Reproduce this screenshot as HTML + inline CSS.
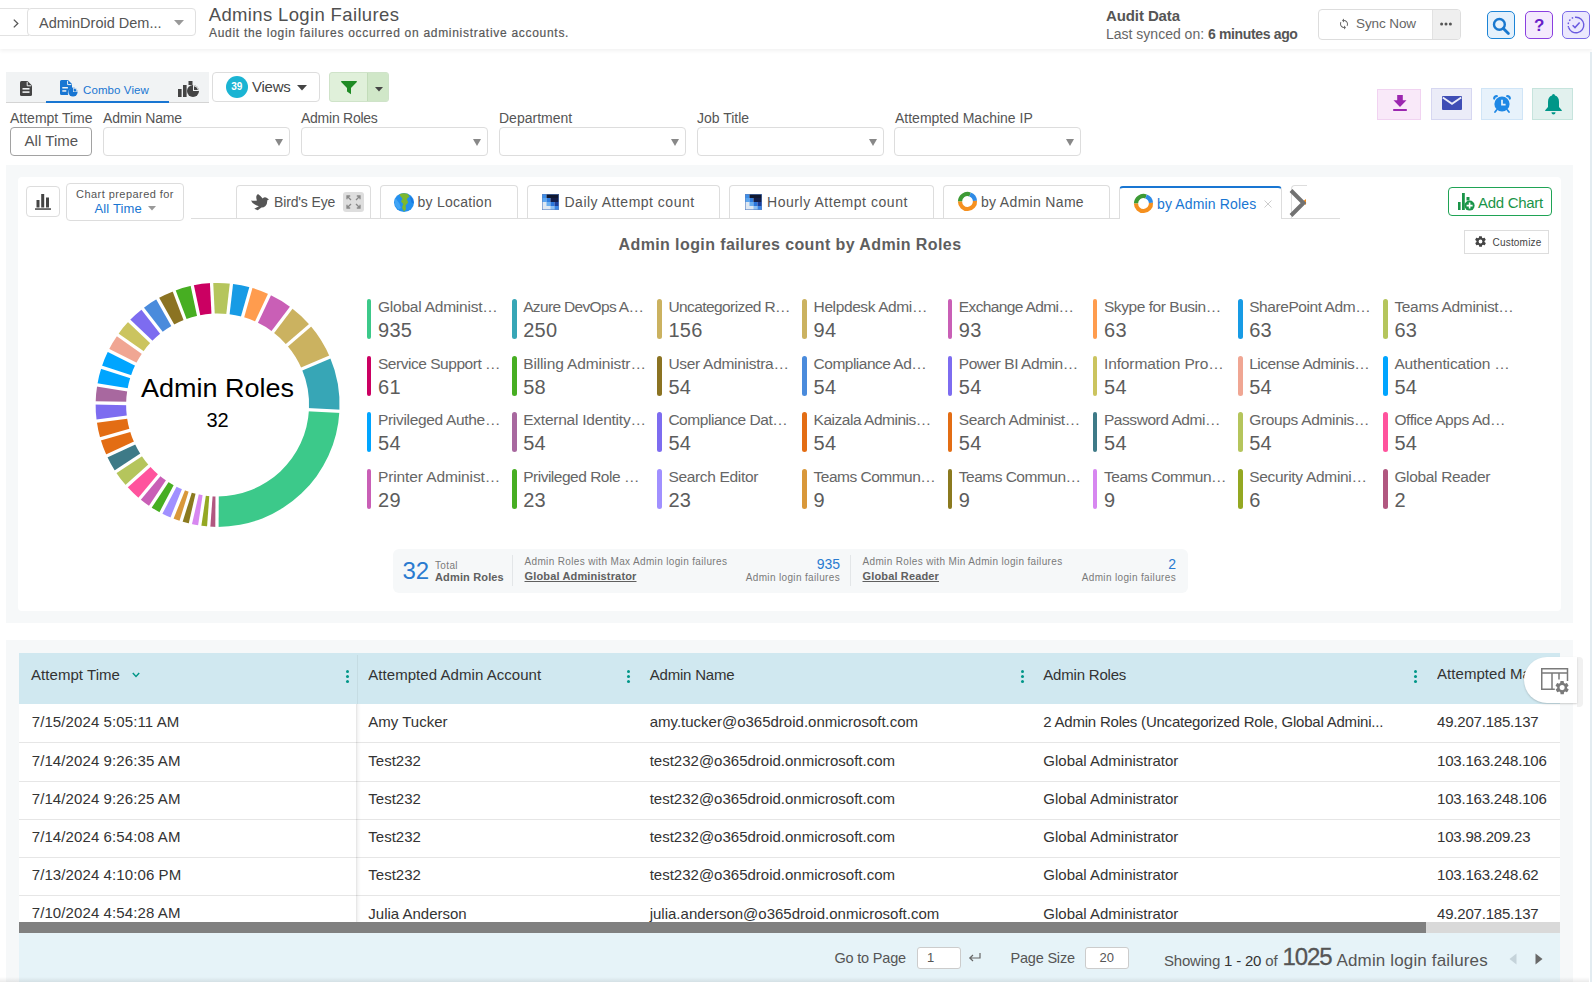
<!DOCTYPE html>
<html lang="en">
<head>
<meta charset="utf-8">
<title>Admins Login Failures</title>
<style>
*{box-sizing:border-box;margin:0;padding:0}
html,body{width:1592px;height:982px;overflow:hidden;background:#fff}
body{position:relative;font-family:"Liberation Sans",sans-serif;color:#555;font-size:14px}
.abs,.t{position:absolute;white-space:nowrap}
.t{line-height:1}
svg{position:absolute;overflow:visible}
/* header */
#hdr{position:absolute;left:0;top:0;width:1592px;height:49px;background:#fff;box-shadow:0 2px 4px rgba(0,0,0,.055)}
.box{position:absolute;border:1px solid #ddd;border-radius:4px;background:#fff}
/* toolbar */
#viewtabs{position:absolute;left:6px;top:72px;width:203px;height:31px;background:#f1f3f4;border-bottom:1px solid #d4d4d4}
.sel{position:absolute;top:127px;width:187px;height:29px;border:1px solid #ddd;border-radius:4px;background:#fff}
.sel:after{content:"";position:absolute;right:6px;top:11px;border:4.5px solid transparent;border-top:7px solid #888;border-bottom:0}
.flabel{position:absolute;top:110px;font-size:14px;line-height:16px;color:#555;white-space:nowrap}
.band{position:absolute;left:6px;width:1567px;background:#f6f8f9}
.card{position:absolute;background:#fff;border-radius:4px}
.abtn{position:absolute;top:88px;height:32px;border:1px solid}

.tab{position:absolute;top:185px;height:33px;border:1px solid #ddd;border-bottom:0;border-radius:4px 4px 0 0;background:#fff}
.tab.act{border-top:2px solid #1976d2;top:186px;height:33px}
.tl{top:194.5px;font-size:14px;color:#555}
.lg{position:absolute;width:136px;height:40px}
.lg i{position:absolute;left:0;top:0;width:4.600px;height:40px;border-radius:2.5px}
.ln{position:absolute;left:11.200px;top:-1.300px;font-size:15.500px;line-height:17px;color:#666;white-space:nowrap}
.lv{position:absolute;left:11.200px;top:19.7px;font-size:20px;line-height:22px;color:#5c5c5c;letter-spacing:.3px}
.sm{font-size:10px;color:#7a7a7a;letter-spacing:.35px}
.sb{font-size:11px;font-weight:700;color:#606060;letter-spacing:.15px}
.row{position:absolute;left:0;width:1541px;height:1px;background:#e6e6e6}
.th{top:667px;font-size:15px;color:#333;letter-spacing:.05px}
.td{font-size:15px;color:#333;letter-spacing:0}
.dots{position:absolute;top:670px;width:3px;height:3px;border-radius:50%;background:#009688;box-shadow:0 5px 0 #009688,0 10px 0 #009688}
.ft{font-size:14.5px;color:#555;letter-spacing:-.2px}
</style>
</head>
<body>
<!-- ================= HEADER ================= -->
<div id="hdr">
  <div class="box" style="left:-3px;top:8px;width:32px;height:28px;border-radius:0;border-color:#e2e2e2;border-right:0"></div>
  <svg style="left:12.500px;top:19px" width="6" height="9" viewBox="0 0 6 9"><path d="M.8 .6L4.800 4.500L.8 8.400" fill="none" stroke="#555" stroke-width="1.300"/></svg>
  <div class="box" style="left:27px;top:8px;width:169px;height:28px;border-color:#e0e0e0"></div>
  <span class="t" style="left:39px;top:15.5px;font-size:14.5px;color:#555;letter-spacing:0">AdminDroid Dem...</span>
  <svg style="left:174px;top:20px" width="10" height="6" viewBox="0 0 10 6"><path d="M0 0H10L5 5.5Z" fill="#999"/></svg>
  <span class="t" style="left:208.700px;top:6px;font-size:18.500px;color:#505050;letter-spacing:.36px">Admins Login Failures</span>
  <span class="t" style="left:209px;top:27px;font-size:12px;color:#585858;letter-spacing:.71px;-webkit-text-stroke:.2px #585858">Audit the login failures occurred on administrative accounts.</span>
  <span class="t" style="left:1106px;top:8px;font-size:15px;color:#555;font-weight:700;letter-spacing:-.1px">Audit Data</span>
  <span class="t" style="left:1106px;top:27px;font-size:14px;color:#666;letter-spacing:0">Last synced on: <b style="color:#555;letter-spacing:-.35px">6 minutes ago</b></span>
  <div class="box" style="left:1318px;top:9px;width:143px;height:31px;overflow:hidden"><div style="position:absolute;left:113px;top:0;width:30px;height:31px;background:#efefef;border-left:1px solid #e2e2e2"></div></div>
  <svg style="left:1338px;top:18px" width="12" height="12" viewBox="0 0 24 24"><path d="M12 4V1L8 5l4 4V6c3.3 0 6 2.7 6 6 0 1-.25 1.97-.7 2.8l1.46 1.46A7.93 7.93 0 0 0 20 12c0-4.42-3.58-8-8-8zm0 14c-3.3 0-6-2.7-6-6 0-1 .25-1.97.7-2.8L5.24 7.74A7.93 7.93 0 0 0 4 12c0 4.42 3.58 8 8 8v3l4-4-4-4v3z" fill="#666"/></svg>
  <span class="t" style="left:1356px;top:17px;font-size:13.5px;color:#666;letter-spacing:-.1px">Sync Now</span>
  <svg style="left:1440px;top:22px" width="12" height="4" viewBox="0 0 12 4"><circle cx="1.6" cy="2" r="1.5" fill="#555"/><circle cx="6" cy="2" r="1.5" fill="#555"/><circle cx="10.4" cy="2" r="1.5" fill="#555"/></svg>
  <div class="abs" style="left:1487px;top:11px;width:28px;height:28px;border:1.5px solid #1b84d6;border-radius:5px;background:#e4f1fc"></div>
  <svg style="left:1492.300px;top:17px" width="18" height="18" viewBox="0 0 18 18"><circle cx="7.4" cy="7.4" r="5.4" fill="none" stroke="#1878cf" stroke-width="2.4"/><path d="M11.4 11.4 L16.4 16.4" stroke="#1878cf" stroke-width="2.8" stroke-linecap="round"/></svg>
  <div class="abs" style="left:1525px;top:11px;width:28px;height:28px;border:1.5px solid #8a3fe0;border-radius:5px;background:#f4eafd"></div>
  <span class="t" style="left:1534px;top:16.500px;font-size:17px;font-weight:700;color:#6a1fc8">?</span>
  <div class="abs" style="left:1562px;top:11px;width:28px;height:28px;border:1.5px solid #7a6be8;border-radius:5px;background:#ebe8fd"></div>
  <svg style="left:1567px;top:16px" width="18" height="18" viewBox="0 0 18 18"><path d="M9 1.2 A7.8 7.8 0 1 1 1.6 11.5" fill="none" stroke="#6a5be0" stroke-width="1.4"/><path d="M1.6 11.5 A7.8 7.8 0 0 1 9 1.2" fill="none" stroke="#6a5be0" stroke-width="1.4" stroke-dasharray="1.6 1.8"/><path d="M5.6 9.2 L8 11.6 L12.6 6.4" fill="none" stroke="#6a5be0" stroke-width="1.5"/></svg>
</div>
<div class="abs" style="left:1589.500px;top:52px;width:3px;height:930px;background:#e3ecf1"></div>

<!-- ================= TOOLBAR ================= -->
<div id="viewtabs"><div style="position:absolute;left:40px;top:28.5px;width:123px;height:2px;background:#1976d2"></div></div>
<svg style="left:20px;top:81px" width="12" height="15" viewBox="0 0 12 15"><path d="M1.5 0H7.5L12 4.5V13.5Q12 15 10.5 15H1.5Q0 15 0 13.5V1.5Q0 0 1.5 0Z" fill="#444"/><path d="M7.2 .8V4.8H11.2" fill="none" stroke="#f1f3f4" stroke-width="1"/><rect x="2.5" y="7" width="7" height="1.6" fill="#f1f3f4"/><rect x="2.5" y="10.3" width="7" height="1.6" fill="#f1f3f4"/></svg>
<svg style="left:60px;top:80px" width="18" height="17" viewBox="0 0 18 17"><path d="M1.5 0H8L12 4V8.2A5 5 0 0 0 8.2 15H1.5Q0 15 0 13.5V1.5Q0 0 1.5 0Z" fill="#1976d2"/><path d="M7.6 .8V4.6H11.4" fill="none" stroke="#f1f3f4" stroke-width="1"/><rect x="2.3" y="7" width="5.6" height="1.5" fill="#f1f3f4"/><rect x="2.3" y="10.2" width="4" height="1.5" fill="#f1f3f4"/><circle cx="13" cy="12" r="4.6" fill="#1976d2"/><path d="M13 12V7.4A4.6 4.6 0 0 1 17.6 12Z" fill="#f1f3f4"/><path d="M13.6 11.4V8.2A3.8 3.8 0 0 1 16.8 11.4Z" fill="#1976d2"/></svg>
<span class="t" style="left:83px;top:85px;font-size:11.5px;color:#1976d2;letter-spacing:.1px">Combo View</span>
<svg style="left:178px;top:80px" width="22" height="17" viewBox="0 0 22 17"><rect x="0" y="9" width="3.6" height="8" fill="#444"/><rect x="5" y="5" width="3.6" height="12" fill="#444"/><rect x="10.5" y="1" width="4" height="4" fill="#444"/><circle cx="15" cy="11" r="6" fill="#444"/><path d="M15 11V5A6 6 0 0 1 21 11Z" fill="#f1f3f4"/><path d="M16 10V6.2A4.8 4.8 0 0 1 19.8 10Z" fill="#444"/></svg>
<div class="box" style="left:212px;top:72px;width:108px;height:30px"></div>
<div class="abs" style="left:225.800px;top:76px;width:22px;height:22px;border-radius:50%;background:#1bb4d3"></div>
<span class="t" style="left:231.300px;top:82px;font-size:10px;font-weight:700;color:#fff">39</span>
<span class="t" style="left:252px;top:79px;font-size:15px;color:#444;letter-spacing:-.25px">Views</span>
<svg style="left:297px;top:85px" width="10" height="6" viewBox="0 0 10 6"><path d="M0 0H10L5 5.5Z" fill="#444"/></svg>
<div class="abs" style="left:329px;top:72px;width:60px;height:30px;border:1px solid #cfe3c9;border-radius:3px;background:#e0f0da;overflow:hidden"><div style="position:absolute;left:37px;top:0;width:22px;height:30px;background:#d0e7c8;border-left:1px solid #c2dcb9"></div></div>
<svg style="left:341px;top:81px" width="16" height="14" viewBox="0 0 16 14"><path d="M.4 0H15.6Q16.3.6 15.6 1.3L10 7V13.2L6 10.6V7L.4 1.3Q-.3.6.4 0Z" fill="#1f8b24"/></svg>
<svg style="left:375px;top:87px" width="8" height="5" viewBox="0 0 8 5"><path d="M0 0H8L4 4.5Z" fill="#444"/></svg>

<div class="abtn" style="left:1377px;top:89px;height:31px;width:44px;background:#f9e9f9;border-color:#f1d3f1"></div>
<svg style="left:1392.5px;top:95px" width="14" height="16" viewBox="0 0 14 16"><path d="M4.200 0H9.800V5.200H13.500L7 12L.5 5.200H4.200Z" fill="#9c27b0"/><rect x=".2" y="14" width="13.600" height="2" fill="#9c27b0"/></svg>
<div class="abtn" style="left:1431px;width:41px;background:#ebecf8;border-color:#d6d7f1"></div>
<svg style="left:1441.5px;top:96px" width="20" height="14" viewBox="0 0 20 14"><rect width="20" height="14" rx="1" fill="#3f4db5"/><path d="M.8 1.500L10 7.800L19.200 1.500" fill="none" stroke="#ebecf8" stroke-width="1.800"/></svg>
<div class="abtn" style="left:1481px;width:42px;background:#e7f2fb;border-color:#d0e5f7"></div>
<svg style="left:1493px;top:95px" width="18" height="18" viewBox="0 0 18 18"><circle cx="9" cy="9" r="7.600" fill="#1e88e5"/><path d="M9 4.800V9.600H12.600" fill="none" stroke="#e7f2fb" stroke-width="1.700"/><path d="M1.200 3.600Q1.200 1.200 3.800 1.200M16.800 3.600Q16.800 1.200 14.200 1.200" stroke="#1e88e5" stroke-width="2.200" fill="none" stroke-linecap="round"/><path d="M3.600 15L2 17M14.400 15L16 17" stroke="#1e88e5" stroke-width="1.800" stroke-linecap="round"/></svg>
<div class="abtn" style="left:1532px;width:41px;background:#e2f1ee;border-color:#c6e4dd"></div>
<svg style="left:1544.500px;top:93.500px" width="17" height="21" viewBox="0 0 17 21"><path d="M8.500 0Q10 0 10 1.600Q14 2.800 14 8V13L16.800 16.200V17H.2V16.200L3 13V8Q3 2.800 7 1.600Q7 0 8.500 0Z" fill="#009688"/><path d="M6.400 18.200H10.600Q10.400 20.500 8.500 20.500T6.400 18.200Z" fill="#009688"/></svg>

<!-- ================= FILTERS ================= -->
<span class="flabel" style="left:10px">Attempt Time</span>
<span class="flabel" style="left:103px;letter-spacing:-.2px">Admin Name</span>
<span class="flabel" style="left:301px;letter-spacing:-.25px">Admin Roles</span>
<span class="flabel" style="left:499px">Department</span>
<span class="flabel" style="left:697px">Job Title</span>
<span class="flabel" style="left:895px">Attempted Machine IP</span>
<div class="abs" style="left:10px;top:127px;width:82px;height:29px;border:1px solid #a2a2a2;border-radius:4px;background:#fff"></div>
<span class="t" style="left:24.5px;top:133px;font-size:15px;color:#555;letter-spacing:.05px">All Time</span>
<div class="sel" style="left:103px"></div>
<div class="sel" style="left:301px"></div>
<div class="sel" style="left:499px"></div>
<div class="sel" style="left:696.500px"></div>
<div class="sel" style="left:894.300px"></div>

<!-- ================= CHART SECTION ================= -->
<div class="band" style="top:165px;height:458px"></div>
<div class="card" style="left:18px;top:177px;width:1543px;height:434px"></div>
<div class="box" style="left:26px;top:186px;width:34px;height:31px"></div>
<svg style="left:35px;top:193px" width="16" height="17" viewBox="0 0 16 17"><rect x="1.5" y="7" width="3" height="7.5" fill="#444"/><rect x="6.2" y="1" width="3" height="13.5" fill="#444"/><rect x="11" y="4.5" width="3" height="10" fill="#444"/><rect x="0" y="15.3" width="16" height="1.5" fill="#444"/></svg>
<div class="box" style="left:66px;top:183px;width:118px;height:38px"></div>
<span class="t" style="left:76px;top:189px;font-size:11px;color:#555;letter-spacing:.45px">Chart prepared for</span>
<span class="t" style="left:94.5px;top:202px;font-size:13px;color:#1976d2;letter-spacing:.15px">All Time</span>
<svg style="left:148px;top:206px" width="8" height="5" viewBox="0 0 8 5"><path d="M0 0H8L4 4.5Z" fill="#999"/></svg>
<!-- tabs -->
<div class="abs" style="left:191px;top:218px;width:1149px;height:1px;background:#ddd"></div>
<div class="tab" style="left:236px;width:135px"></div>
<div class="tab" style="left:380px;width:138px"></div>
<div class="tab" style="left:527px;width:193px"></div>
<div class="tab" style="left:729px;width:205px"></div>
<div class="tab" style="left:943px;width:167px"></div>
<div class="tab" style="left:1291px;width:16px;border-right:0;border-top-right-radius:0"></div>
<div class="tab act" style="left:1119px;width:163px"></div>
<!-- bird -->
<svg style="left:251.300px;top:194.300px" width="18.200" height="16.400" viewBox="0 0 18.200 16.400"><path d="M7 0Q9.500 1.500 11.700 4.600Q13 3 14.800 3.400Q16.500 3.800 16.800 4.800L18.100 5.300L16.400 6.200Q16.300 10 14.500 12Q12.500 13.800 10.500 13.600L6.700 16.300L3.300 14.700L7.900 12.200Q4.500 11.500 3.500 10.300Q1 8.800 0 6.500Q3 7.200 6 6.500Q5 4.500 5.400 2.100Q5.800 .8 7 0Z" fill="#555"/></svg>
<span class="t tl" style="left:274px;letter-spacing:-.14px">Bird's Eye</span>
<div class="abs" style="left:343px;top:192px;width:21px;height:20px;background:#dedede;border-radius:3px"></div>
<svg style="left:346px;top:195px" width="15" height="14" viewBox="0 0 15 14"><g fill="none" stroke="#888" stroke-width="1.3"><path d="M1 4.2V1H4.2M1.2 1.2L5 5"/><path d="M14 4.2V1H10.8M13.8 1.2L10 5"/><path d="M1 9.8V13H4.2M1.2 12.8L5 9"/><path d="M14 9.8V13H10.8M13.8 12.8L10 9"/></g></svg>
<!-- globe -->
<svg style="left:394px;top:193px" width="20" height="19" viewBox="0 0 20 19"><ellipse cx="10" cy="9.500" rx="10" ry="9.500" fill="#2490ee"/><path d="M1.500 5Q.3 8.500 1.200 12.500L4.500 16.500L7 15L5.500 10.500L3.500 8Z" fill="#42a5f5"/><path d="M5.500 1.200Q9.500 -.5 13.500 .8L15.500 3.500L12.800 6L14.200 9.500L11.500 12.500L12 16L10 18.800L8 14.500L9.200 11L7 8.500L8.500 5.500L6.500 3.500Z" fill="#7cb82f"/><path d="M16 3Q19.500 6 19.800 10.500L17.500 9.500L16.500 6Z" fill="#1a7ae0"/></svg>
<span class="t tl" style="left:417.5px;letter-spacing:.26px">by Location</span>
<!-- heat icons -->
<svg style="left:542px;top:194px" width="17" height="16" viewBox="0 0 17 16"><g><rect width="17" height="16" fill="#dfe8f2"/><rect x="0" y="0" width="4.500" height="4" fill="#3d8ee8"/><rect x="4.500" y="0" width="12.500" height="4" fill="#101830"/><rect x="0" y="4" width="4.500" height="4" fill="#5aa5f0"/><rect x="4.500" y="4" width="4" height="4" fill="#2f7de0"/><rect x="8.500" y="4" width="8.500" height="4" fill="#131d48"/><rect x="4.500" y="8" width="4" height="4" fill="#6aaef0"/><rect x="8.500" y="8" width="4" height="4" fill="#2a76dd"/><rect x="12.500" y="8" width="4.500" height="4" fill="#1c3f9a"/><rect x="8.500" y="12" width="4" height="4" fill="#8fc0f2"/><rect x="12.500" y="12" width="4.500" height="4" fill="#3b86e6"/><rect x=".3" y=".3" width="16.400" height="15.400" fill="none" stroke="#5b83c4" stroke-width=".6"/></g></svg>
<span class="t tl" style="left:564.5px;letter-spacing:.5px">Daily Attempt count</span>
<svg style="left:745px;top:194px" width="17" height="16" viewBox="0 0 17 16"><g><rect width="17" height="16" fill="#dfe8f2"/><rect x="0" y="0" width="4.500" height="4" fill="#3d8ee8"/><rect x="4.500" y="0" width="12.500" height="4" fill="#101830"/><rect x="0" y="4" width="4.500" height="4" fill="#5aa5f0"/><rect x="4.500" y="4" width="4" height="4" fill="#2f7de0"/><rect x="8.500" y="4" width="8.500" height="4" fill="#131d48"/><rect x="4.500" y="8" width="4" height="4" fill="#6aaef0"/><rect x="8.500" y="8" width="4" height="4" fill="#2a76dd"/><rect x="12.500" y="8" width="4.500" height="4" fill="#1c3f9a"/><rect x="8.500" y="12" width="4" height="4" fill="#8fc0f2"/><rect x="12.500" y="12" width="4.500" height="4" fill="#3b86e6"/><rect x=".3" y=".3" width="16.400" height="15.400" fill="none" stroke="#5b83c4" stroke-width=".6"/></g></svg>
<span class="t tl" style="left:767px;letter-spacing:.55px">Hourly Attempt count</span>
<!-- ring icons -->
<svg style="left:958px;top:192px" width="19" height="19" viewBox="0 0 19 19"><g fill="none" stroke-width="4.200"><path d="M2 9.500A7.500 7.500 0 0 1 12.070 2.450" stroke="#3d9a35"/><path d="M12.070 2.450A7.500 7.500 0 0 1 16.970 8.850" stroke="#2f8be6"/><path d="M16.970 8.850A7.500 7.500 0 1 1 2 9.500" stroke="#f5901f"/></g></svg>
<span class="t tl" style="left:981px;letter-spacing:.32px">by Admin Name</span>
<svg style="left:1134px;top:194px" width="19" height="19" viewBox="0 0 19 19"><g fill="none" stroke-width="4.200"><path d="M2 9.500A7.500 7.500 0 0 1 12.070 2.450" stroke="#3d9a35"/><path d="M12.070 2.450A7.500 7.500 0 0 1 16.970 8.850" stroke="#2f8be6"/><path d="M16.970 8.850A7.500 7.500 0 1 1 2 9.500" stroke="#f5901f"/></g></svg>
<span class="t tl" style="left:1157px;top:196.5px;color:#1976d2;letter-spacing:.15px">by Admin Roles</span>
<svg style="left:1264px;top:200px" width="8" height="8" viewBox="0 0 8 8"><path d="M.5 .5L7.5 7.5M7.5 .5L.5 7.5" stroke="#ccc" stroke-width="1"/></svg>
<svg style="left:1302px;top:198px" width="6" height="8" viewBox="0 0 6 8"><path d="M0 4L4 1V7Z" fill="#f28c1e"/></svg>
<svg style="left:1289px;top:189px" width="17" height="28" viewBox="0 0 17 28"><path d="M2 1.5L14.5 14L2 26.5" fill="none" stroke="#727272" stroke-width="4"/></svg>
<!-- add chart / customize -->
<div class="abs" style="left:1448px;top:187px;width:104px;height:29px;border:1.5px solid #1fa355;border-radius:4px;background:#fff"></div>
<svg style="left:1458px;top:192px" width="17" height="19" viewBox="0 0 17 19"><rect x="0" y="10" width="2.6" height="8" fill="#1a9448"/><rect x="4" y="1" width="2.8" height="17" fill="#1a9448"/><rect x="8.5" y="5" width="3" height="3.5" fill="#1a9448"/><circle cx="11.6" cy="13.6" r="5" fill="#1a9448"/><path d="M11.6 10.6V16.6M8.6 13.6H14.6" stroke="#fff" stroke-width="1.6"/></svg>
<span class="t" style="left:1478px;top:195px;font-size:15px;color:#1a9448;letter-spacing:-.3px">Add Chart</span>
<div class="abs" style="left:1464px;top:230px;width:85px;height:24px;border:1px solid #ddd;background:#fff"></div>
<svg style="left:1474px;top:235px" width="13" height="13" viewBox="0 0 24 24"><path d="M19.4 13a7.5 7.5 0 0 0 0-2l2.1-1.6a.5.5 0 0 0 .1-.6l-2-3.5a.5.5 0 0 0-.6-.2l-2.5 1a7.3 7.3 0 0 0-1.7-1l-.4-2.600a.5.500 0 0 0-.5-.4h-4a.5.500 0 0 0-.5.400l-.4 2.600a7.300 7.300 0 0 0-1.700 1l-2.500-1a.5.500 0 0 0-.6.200l-2 3.500a.5.500 0 0 0 .1.600L4.600 11a7.500 7.500 0 0 0 0 2l-2.100 1.600a.5.500 0 0 0-.1.600l2 3.500c.1.200.4.300.6.200l2.500-1c.5.400 1.100.700 1.700 1l.4 2.600c0 .2.200.4.500.4h4c.2 0 .5-.2.500-.4l.4-2.600a7.300 7.300 0 0 0 1.700-1l2.500 1c.2.100.5 0 .6-.2l2-3.500a.5.500 0 0 0-.1-.6zM12 15.500a3.500 3.500 0 1 1 0-7 3.500 3.500 0 0 1 0 7z" fill="#444"/></svg>
<span class="t" style="left:1492.500px;top:238px;font-size:10px;color:#444;letter-spacing:.2px">Customize</span>
<span class="t" style="left:618.5px;top:237px;font-size:16px;font-weight:700;color:#5e5e5e;letter-spacing:.4px">Admin login failures count by Admin Roles</span>
<svg style="left:0;top:0" width="1592" height="982" viewBox="0 0 1592 982">
<path d="M216.96 526.90A122.0 122.0 0 0 0 339.43 411.28L308.97 409.68A91.5 91.5 0 0 1 217.12 496.40Z" fill="#3cc98a"/>
<path d="M339.43 411.28A122.0 122.0 0 0 0 329.85 357.12L301.79 369.06A91.5 91.5 0 0 1 308.97 409.68Z" fill="#37a6b6"/>
<path d="M329.85 357.12A122.0 122.0 0 0 0 310.08 325.33L286.96 345.23A91.5 91.5 0 0 1 301.79 369.06Z" fill="#cbb260"/>
<path d="M310.08 325.33A122.0 122.0 0 0 0 291.34 307.71L272.91 332.01A91.5 91.5 0 0 1 286.96 345.23Z" fill="#cbb260"/>
<path d="M291.34 307.71A122.0 122.0 0 0 0 269.49 294.49L256.52 322.09A91.5 91.5 0 0 1 272.91 332.01Z" fill="#c95fb6"/>
<path d="M269.49 294.49A122.0 122.0 0 0 0 250.90 287.53L242.58 316.87A91.5 91.5 0 0 1 256.52 322.09Z" fill="#ff9c4e"/>
<path d="M250.90 287.53A122.0 122.0 0 0 0 231.43 283.69L227.97 313.99A91.5 91.5 0 0 1 242.58 316.87Z" fill="#179be5"/>
<path d="M231.43 283.69A122.0 122.0 0 0 0 211.59 283.05L213.09 313.51A91.5 91.5 0 0 1 227.97 313.99Z" fill="#b5c55c"/>
<path d="M211.59 283.05A122.0 122.0 0 0 0 192.28 285.56L198.61 315.39A91.5 91.5 0 0 1 213.09 313.51Z" fill="#cb0062"/>
<path d="M192.28 285.56A122.0 122.0 0 0 0 174.14 290.90L185.01 319.40A91.5 91.5 0 0 1 198.61 315.39Z" fill="#47ae22"/>
<path d="M174.14 290.90A122.0 122.0 0 0 0 157.72 298.61L172.69 325.18A91.5 91.5 0 0 1 185.01 319.40Z" fill="#8b7322"/>
<path d="M157.72 298.61A122.0 122.0 0 0 0 142.62 308.66L161.36 332.72A91.5 91.5 0 0 1 172.69 325.18Z" fill="#4a8bdc"/>
<path d="M142.62 308.66A122.0 122.0 0 0 0 129.18 320.85L151.28 341.86A91.5 91.5 0 0 1 161.36 332.72Z" fill="#7d6cf0"/>
<path d="M129.18 320.85A122.0 122.0 0 0 0 117.69 334.89L142.67 352.39A91.5 91.5 0 0 1 151.28 341.86Z" fill="#cbc45f"/>
<path d="M117.69 334.89A122.0 122.0 0 0 0 108.41 350.48L135.71 364.09A91.5 91.5 0 0 1 142.67 352.39Z" fill="#f0a693"/>
<path d="M108.41 350.48A122.0 122.0 0 0 0 101.55 367.27L130.56 376.68A91.5 91.5 0 0 1 135.71 364.09Z" fill="#00a5ff"/>
<path d="M101.55 367.27A122.0 122.0 0 0 0 97.25 384.90L127.34 389.90A91.5 91.5 0 0 1 130.56 376.68Z" fill="#00a5ff"/>
<path d="M97.25 384.90A122.0 122.0 0 0 0 95.62 402.97L126.11 403.45A91.5 91.5 0 0 1 127.34 389.90Z" fill="#a8689f"/>
<path d="M95.62 402.97A122.0 122.0 0 0 0 96.68 421.08L126.91 417.04A91.5 91.5 0 0 1 126.11 403.45Z" fill="#7d6cf0"/>
<path d="M96.68 421.08A122.0 122.0 0 0 0 100.41 438.84L129.71 430.35A91.5 91.5 0 0 1 126.91 417.04Z" fill="#e36d14"/>
<path d="M100.41 438.84A122.0 122.0 0 0 0 106.74 455.84L134.46 443.10A91.5 91.5 0 0 1 129.71 430.35Z" fill="#e36d14"/>
<path d="M106.74 455.84A122.0 122.0 0 0 0 115.52 471.72L141.04 455.01A91.5 91.5 0 0 1 134.46 443.10Z" fill="#3e7a87"/>
<path d="M115.52 471.72A122.0 122.0 0 0 0 126.56 486.12L149.32 465.81A91.5 91.5 0 0 1 141.04 455.01Z" fill="#b5c55c"/>
<path d="M126.56 486.12A122.0 122.0 0 0 0 139.61 498.72L159.11 475.26A91.5 91.5 0 0 1 149.32 465.81Z" fill="#ff539d"/>
<path d="M139.61 498.72A122.0 122.0 0 0 0 150.37 506.70L167.17 481.25A91.5 91.5 0 0 1 159.11 475.26Z" fill="#c95fb6"/>
<path d="M150.37 506.70A122.0 122.0 0 0 0 160.92 512.93L175.09 485.92A91.5 91.5 0 0 1 167.17 481.25Z" fill="#47ae22"/>
<path d="M160.92 512.93A122.0 122.0 0 0 0 172.04 518.07L183.43 489.78A91.5 91.5 0 0 1 175.09 485.92Z" fill="#a190ff"/>
<path d="M172.04 518.07A122.0 122.0 0 0 0 181.07 521.30L190.20 492.20A91.5 91.5 0 0 1 183.43 489.78Z" fill="#d9983a"/>
<path d="M181.07 521.30A122.0 122.0 0 0 0 190.32 523.81L197.14 494.08A91.5 91.5 0 0 1 190.20 492.20Z" fill="#8b7a1f"/>
<path d="M190.32 523.81A122.0 122.0 0 0 0 199.75 525.59L204.21 495.41A91.5 91.5 0 0 1 197.14 494.08Z" fill="#d787f0"/>
<path d="M199.75 525.59A122.0 122.0 0 0 0 208.71 526.58L210.93 496.16A91.5 91.5 0 0 1 204.21 495.41Z" fill="#94a822"/>
<path d="M208.71 526.58A122.0 122.0 0 0 0 216.96 526.90L217.12 496.40A91.5 91.5 0 0 1 210.93 496.16Z" fill="#b15780"/>
<path d="M216.95 528.90L217.13 494.40" stroke="#fff" stroke-width="3.3"/>
<path d="M341.43 411.38L306.98 409.58" stroke="#fff" stroke-width="3.3"/>
<path d="M331.69 356.34L299.95 369.85" stroke="#fff" stroke-width="3.3"/>
<path d="M311.60 324.03L285.45 346.53" stroke="#fff" stroke-width="3.3"/>
<path d="M292.55 306.12L271.70 333.60" stroke="#fff" stroke-width="3.3"/>
<path d="M270.34 292.68L255.67 323.90" stroke="#fff" stroke-width="3.3"/>
<path d="M251.45 285.61L242.03 318.80" stroke="#fff" stroke-width="3.3"/>
<path d="M231.65 281.70L227.74 315.98" stroke="#fff" stroke-width="3.3"/>
<path d="M211.49 281.05L213.19 315.51" stroke="#fff" stroke-width="3.3"/>
<path d="M191.86 283.60L199.02 317.35" stroke="#fff" stroke-width="3.3"/>
<path d="M173.43 289.03L185.72 321.27" stroke="#fff" stroke-width="3.3"/>
<path d="M156.74 296.86L173.67 326.92" stroke="#fff" stroke-width="3.3"/>
<path d="M141.39 307.08L162.59 334.30" stroke="#fff" stroke-width="3.3"/>
<path d="M127.73 319.47L152.73 343.24" stroke="#fff" stroke-width="3.3"/>
<path d="M116.05 333.74L144.30 353.54" stroke="#fff" stroke-width="3.3"/>
<path d="M106.62 349.59L137.50 364.98" stroke="#fff" stroke-width="3.3"/>
<path d="M99.64 366.66L132.46 377.30" stroke="#fff" stroke-width="3.3"/>
<path d="M95.28 384.57L129.31 390.23" stroke="#fff" stroke-width="3.3"/>
<path d="M93.62 402.94L128.11 403.48" stroke="#fff" stroke-width="3.3"/>
<path d="M94.70 421.35L128.89 416.77" stroke="#fff" stroke-width="3.3"/>
<path d="M98.49 439.39L131.63 429.80" stroke="#fff" stroke-width="3.3"/>
<path d="M104.93 456.67L136.27 442.27" stroke="#fff" stroke-width="3.3"/>
<path d="M113.85 472.81L142.72 453.92" stroke="#fff" stroke-width="3.3"/>
<path d="M125.07 487.45L150.81 464.48" stroke="#fff" stroke-width="3.3"/>
<path d="M138.33 500.26L160.39 473.73" stroke="#fff" stroke-width="3.3"/>
<path d="M149.26 508.37L168.28 479.58" stroke="#fff" stroke-width="3.3"/>
<path d="M159.99 514.70L176.02 484.15" stroke="#fff" stroke-width="3.3"/>
<path d="M171.29 519.93L184.17 487.92" stroke="#fff" stroke-width="3.3"/>
<path d="M180.47 523.21L190.80 490.29" stroke="#fff" stroke-width="3.3"/>
<path d="M189.87 525.76L197.59 492.13" stroke="#fff" stroke-width="3.3"/>
<path d="M199.45 527.56L204.50 493.44" stroke="#fff" stroke-width="3.3"/>
<path d="M208.56 528.57L211.08 494.16" stroke="#fff" stroke-width="3.3"/>
<text x="217.6" y="396.5" text-anchor="middle" font-family="Liberation Sans, sans-serif" font-size="26.5" fill="#000" textLength="153" lengthAdjust="spacingAndGlyphs">Admin Roles</text>
<text x="217.6" y="426.5" text-anchor="middle" font-family="Liberation Sans, sans-serif" font-size="20" fill="#000">32</text>
</svg>
<div class="lg" style="left:366.8px;top:299.3px"><i style="background:#3cc98a"></i><span class="ln" style="letter-spacing:-0.23px">Global Administ…</span><span class="lv">935</span></div>
<div class="lg" style="left:512.0px;top:299.3px"><i style="background:#37a6b6"></i><span class="ln" style="letter-spacing:-0.66px">Azure DevOps A…</span><span class="lv">250</span></div>
<div class="lg" style="left:657.2px;top:299.3px"><i style="background:#cbb260"></i><span class="ln" style="letter-spacing:-0.58px">Uncategorized R…</span><span class="lv">156</span></div>
<div class="lg" style="left:802.4px;top:299.3px"><i style="background:#cbb260"></i><span class="ln" style="letter-spacing:-0.39px">Helpdesk Admi…</span><span class="lv">94</span></div>
<div class="lg" style="left:947.6px;top:299.3px"><i style="background:#c95fb6"></i><span class="ln" style="letter-spacing:-0.62px">Exchange Admi…</span><span class="lv">93</span></div>
<div class="lg" style="left:1092.8px;top:299.3px"><i style="background:#ff9c4e"></i><span class="ln" style="letter-spacing:-0.45px">Skype for Busin…</span><span class="lv">63</span></div>
<div class="lg" style="left:1238.0px;top:299.3px"><i style="background:#179be5"></i><span class="ln" style="letter-spacing:-0.43px">SharePoint Adm…</span><span class="lv">63</span></div>
<div class="lg" style="left:1383.2px;top:299.3px"><i style="background:#b5c55c"></i><span class="ln" style="letter-spacing:-0.33px">Teams Administ…</span><span class="lv">63</span></div>
<div class="lg" style="left:366.8px;top:355.9px"><i style="background:#cb0062"></i><span class="ln" style="letter-spacing:-0.47px">Service Support …</span><span class="lv">61</span></div>
<div class="lg" style="left:512.0px;top:355.9px"><i style="background:#47ae22"></i><span class="ln" style="letter-spacing:-0.13px">Billing Administr…</span><span class="lv">58</span></div>
<div class="lg" style="left:657.2px;top:355.9px"><i style="background:#8b7322"></i><span class="ln" style="letter-spacing:-0.29px">User Administra…</span><span class="lv">54</span></div>
<div class="lg" style="left:802.4px;top:355.9px"><i style="background:#4a8bdc"></i><span class="ln" style="letter-spacing:-0.5px">Compliance Ad…</span><span class="lv">54</span></div>
<div class="lg" style="left:947.6px;top:355.9px"><i style="background:#7d6cf0"></i><span class="ln" style="letter-spacing:-0.45px">Power BI Admin…</span><span class="lv">54</span></div>
<div class="lg" style="left:1092.8px;top:355.9px"><i style="background:#cbc45f"></i><span class="ln" style="letter-spacing:-0.12px">Information Pro…</span><span class="lv">54</span></div>
<div class="lg" style="left:1238.0px;top:355.9px"><i style="background:#f0a693"></i><span class="ln" style="letter-spacing:-0.46px">License Adminis…</span><span class="lv">54</span></div>
<div class="lg" style="left:1383.2px;top:355.9px"><i style="background:#00a5ff"></i><span class="ln" style="letter-spacing:-0.17px">Authentication …</span><span class="lv">54</span></div>
<div class="lg" style="left:366.8px;top:412.4px"><i style="background:#00a5ff"></i><span class="ln" style="letter-spacing:-0.32px">Privileged Authe…</span><span class="lv">54</span></div>
<div class="lg" style="left:512.0px;top:412.4px"><i style="background:#a8689f"></i><span class="ln" style="letter-spacing:-0.23px">External Identity…</span><span class="lv">54</span></div>
<div class="lg" style="left:657.2px;top:412.4px"><i style="background:#7d6cf0"></i><span class="ln" style="letter-spacing:-0.45px">Compliance Dat…</span><span class="lv">54</span></div>
<div class="lg" style="left:802.4px;top:412.4px"><i style="background:#e36d14"></i><span class="ln" style="letter-spacing:-0.48px">Kaizala Adminis…</span><span class="lv">54</span></div>
<div class="lg" style="left:947.6px;top:412.4px"><i style="background:#e36d14"></i><span class="ln" style="letter-spacing:-0.41px">Search Administ…</span><span class="lv">54</span></div>
<div class="lg" style="left:1092.8px;top:412.4px"><i style="background:#3e7a87"></i><span class="ln" style="letter-spacing:-0.45px">Password Admi…</span><span class="lv">54</span></div>
<div class="lg" style="left:1238.0px;top:412.4px"><i style="background:#b5c55c"></i><span class="ln" style="letter-spacing:-0.33px">Groups Adminis…</span><span class="lv">54</span></div>
<div class="lg" style="left:1383.2px;top:412.4px"><i style="background:#ff539d"></i><span class="ln" style="letter-spacing:-0.41px">Office Apps Ad…</span><span class="lv">54</span></div>
<div class="lg" style="left:366.8px;top:468.9px"><i style="background:#c95fb6"></i><span class="ln" style="letter-spacing:-0.11px">Printer Administ…</span><span class="lv">29</span></div>
<div class="lg" style="left:512.0px;top:468.9px"><i style="background:#47ae22"></i><span class="ln" style="letter-spacing:-0.49px">Privileged Role …</span><span class="lv">23</span></div>
<div class="lg" style="left:657.2px;top:468.9px"><i style="background:#a190ff"></i><span class="ln" style="letter-spacing:-0.32px">Search Editor</span><span class="lv">23</span></div>
<div class="lg" style="left:802.4px;top:468.9px"><i style="background:#d9983a"></i><span class="ln" style="letter-spacing:-0.51px">Teams Commun…</span><span class="lv">9</span></div>
<div class="lg" style="left:947.6px;top:468.9px"><i style="background:#8b7a1f"></i><span class="ln" style="letter-spacing:-0.51px">Teams Commun…</span><span class="lv">9</span></div>
<div class="lg" style="left:1092.8px;top:468.9px"><i style="background:#d787f0"></i><span class="ln" style="letter-spacing:-0.48px">Teams Commun…</span><span class="lv">9</span></div>
<div class="lg" style="left:1238.0px;top:468.9px"><i style="background:#94a822"></i><span class="ln" style="letter-spacing:-0.3px">Security Admini…</span><span class="lv">6</span></div>
<div class="lg" style="left:1383.2px;top:468.9px"><i style="background:#b15780"></i><span class="ln" style="letter-spacing:-0.33px">Global Reader</span><span class="lv">2</span></div>
<!-- summary strip -->
<div class="abs" style="left:393px;top:549px;width:795px;height:44px;background:#f6f8f9;border-radius:6px"></div>
<span class="t" style="left:402.5px;top:559px;font-size:24px;color:#2a7bd0">32</span>
<span class="t sm" style="left:435px;top:560.5px">Total</span>
<span class="t sb" style="left:435px;top:572px">Admin Roles</span>
<div class="abs" style="left:512px;top:555px;width:1px;height:31px;background:#e3e6e8"></div>
<span class="t sm" style="left:524.5px;top:556.5px">Admin Roles with Max Admin login failures</span>
<span class="t sb" style="left:524.5px;top:571px;text-decoration:underline">Global Administrator</span>
<span class="t" style="right:752px;top:557px;font-size:14px;color:#2a7bd0">935</span>
<span class="t sm" style="right:752px;top:572.5px">Admin login failures</span>
<div class="abs" style="left:850px;top:555px;width:1px;height:31px;background:#e3e6e8"></div>
<span class="t sm" style="left:862.5px;top:556.5px">Admin Roles with Min Admin login failures</span>
<span class="t sb" style="left:862.5px;top:571px;text-decoration:underline">Global Reader</span>
<span class="t" style="right:416px;top:557px;font-size:14px;color:#2a7bd0">2</span>
<span class="t sm" style="right:416px;top:572.5px">Admin login failures</span>

<!-- ================= TABLE SECTION ================= -->
<div class="band" style="top:640px;height:342px"></div>
<div class="abs" style="left:19px;top:653px;width:1541px;height:329px;background:#e6f3f8"></div>
<div class="abs" style="left:19px;top:653px;width:1541px;height:52px;background:#d0e8f0"></div>
<div class="abs" style="left:19px;top:704px;width:1541px;height:218px;background:#fff;overflow:hidden">
  <div class="row" style="top:38px"></div><div class="row" style="top:76.700px"></div><div class="row" style="top:115px"></div><div class="row" style="top:153.200px"></div><div class="row" style="top:191.400px"></div>
</div>
<div class="abs" style="left:356.500px;top:655px;width:1px;height:49px;background:rgba(0,0,0,.05)"></div><div class="abs" style="left:356px;top:704px;width:5px;height:218px;background:linear-gradient(90deg,rgba(0,0,0,.11),rgba(0,0,0,.03) 40%,rgba(0,0,0,0))"></div>
<span class="t th" style="left:31px">Attempt Time</span>
<svg style="left:132px;top:672px" width="8" height="6" viewBox="0 0 8 6"><path d="M.8 1L4 4.4L7.2 1" fill="none" stroke="#009688" stroke-width="1.5"/></svg>
<span class="t th" style="left:368.3px">Attempted Admin Account</span>
<span class="t th" style="left:649.7px;letter-spacing:-.2px">Admin Name</span>
<span class="t th" style="left:1043.3px;letter-spacing:-.2px">Admin Roles</span>
<div class="abs" style="left:1437px;top:653px;width:123px;height:51px;overflow:hidden"><span class="t th" style="left:0;top:13px">Attempted Machine IP</span></div>
<i class="dots" style="left:345.5px"></i><i class="dots" style="left:626.5px"></i><i class="dots" style="left:1020.5px"></i><i class="dots" style="left:1414px"></i>

<span class="t td" style="left:31.7px;top:714px;letter-spacing:.1px">7/15/2024 5:05:11 AM</span><span class="t td" style="left:368.3px;top:714px">Amy Tucker</span><span class="t td" style="left:649.7px;top:714px">amy.tucker@o365droid.onmicrosoft.com</span><span class="t td" style="left:1043.3px;top:714px"><span style="letter-spacing:-.22px">2 Admin Roles (Uncategorized Role, Global Admini...</span></span><span class="t td" style="left:1437px;top:714px;letter-spacing:-.2px">49.207.185.137</span>
<span class="t td" style="left:31.7px;top:752.7px;letter-spacing:.1px">7/14/2024 9:26:35 AM</span><span class="t td" style="left:368.3px;top:753px">Test232</span><span class="t td" style="left:649.7px;top:753px">test232@o365droid.onmicrosoft.com</span><span class="t td" style="left:1043.3px;top:753px">Global Administrator</span><span class="t td" style="left:1437px;top:753px;letter-spacing:-.2px">103.163.248.106</span>
<span class="t td" style="left:31.7px;top:791px;letter-spacing:.1px">7/14/2024 9:26:25 AM</span><span class="t td" style="left:368.3px;top:791px">Test232</span><span class="t td" style="left:649.7px;top:791px">test232@o365droid.onmicrosoft.com</span><span class="t td" style="left:1043.3px;top:791px">Global Administrator</span><span class="t td" style="left:1437px;top:791px;letter-spacing:-.2px">103.163.248.106</span>
<span class="t td" style="left:31.7px;top:829px;letter-spacing:.1px">7/14/2024 6:54:08 AM</span><span class="t td" style="left:368.3px;top:829px">Test232</span><span class="t td" style="left:649.7px;top:829px">test232@o365droid.onmicrosoft.com</span><span class="t td" style="left:1043.3px;top:829px">Global Administrator</span><span class="t td" style="left:1437px;top:829px;letter-spacing:-.2px">103.98.209.23</span>
<span class="t td" style="left:31.7px;top:867px;letter-spacing:.1px">7/13/2024 4:10:06 PM</span><span class="t td" style="left:368.3px;top:867px">Test232</span><span class="t td" style="left:649.7px;top:867px">test232@o365droid.onmicrosoft.com</span><span class="t td" style="left:1043.3px;top:867px">Global Administrator</span><span class="t td" style="left:1437px;top:867px;letter-spacing:-.2px">103.163.248.62</span>
<span class="t td" style="left:31.7px;top:905px;letter-spacing:.1px">7/10/2024 4:54:28 AM</span><span class="t td" style="left:368.3px;top:906px">Julia Anderson</span><span class="t td" style="left:649.7px;top:906px">julia.anderson@o365droid.onmicrosoft.com</span><span class="t td" style="left:1043.3px;top:906px">Global Administrator</span><span class="t td" style="left:1437px;top:906px;letter-spacing:-.2px">49.207.185.137</span>

<div class="abs" style="left:19px;top:922px;width:1541px;height:11px;background:#d9d9d9"></div>
<div class="abs" style="left:19px;top:922px;width:1407px;height:11px;background:#808080"></div>

<!-- floating column settings button -->
<div class="abs" style="left:1577px;top:657px;width:5.500px;height:50px;background:#f1f1f1;border-radius:0 4px 4px 0"></div>
<div class="abs" style="left:1524px;top:657px;width:53px;height:46px;background:#fff;border-radius:23px 0 0 23px;box-shadow:0 1px 2px rgba(0,0,0,.18)"></div>
<svg style="left:1541px;top:667.700px" width="28" height="26" viewBox="0 0 28 26"><g fill="none" stroke="#7a7a7a" stroke-width="1.500"><path d="M26.500 13V.75H.75V21.300H13.800M.75 5H26.500M11 5V21.300M18 5V11.500"/></g><g transform="translate(13.200 11.700) scale(.66)"><path d="M19.400 13a7.500 7.500 0 0 0 0-2l2.100-1.600a.5.500 0 0 0 .1-.6l-2-3.500a.5.500 0 0 0-.6-.2l-2.500 1a7.300 7.300 0 0 0-1.700-1l-.4-2.600a.5.500 0 0 0-.5-.4h-4a.5.500 0 0 0-.5.400l-.4 2.600a7.300 7.300 0 0 0-1.700 1l-2.500-1a.5.500 0 0 0-.6.200l-2 3.500a.5.500 0 0 0 .1.600L4.600 11a7.500 7.500 0 0 0 0 2l-2.100 1.600a.5.500 0 0 0-.1.600l2 3.500c.1.200.4.300.6.200l2.500-1c.5.400 1.100.7 1.700 1l.4 2.600c0 .2.200.4.500.4h4c.2 0 .5-.2.500-.4l.4-2.600a7.300 7.300 0 0 0 1.700-1l2.500 1c.2.100.5 0 .6-.2l2-3.500a.5.500 0 0 0-.1-.6zM12 15.800a3.800 3.800 0 1 1 0-7.600 3.800 3.800 0 0 1 0 7.600z" fill="#7a7a7a"/></g></svg>

<!-- footer / pager -->
<span class="t ft" style="left:834.5px;top:951px">Go to Page</span>
<div class="abs" style="left:916.5px;top:946.5px;width:44px;height:22px;border:1px solid #ccc;border-radius:3px;background:#fff"></div>
<span class="t" style="left:927px;top:951px;font-size:13px;color:#555">1</span>
<svg style="left:968px;top:952px" width="13" height="10" viewBox="0 0 13 10"><path d="M12 1V6H2M5 3L1.800 6L5 9" fill="none" stroke="#666" stroke-width="1.2"/></svg>
<span class="t ft" style="left:1010.5px;top:951px">Page Size</span>
<div class="abs" style="left:1085px;top:946.5px;width:44px;height:22px;border:1px solid #ccc;border-radius:3px;background:#fff"></div>
<span class="t" style="left:1099.5px;top:951px;font-size:13px;color:#555">20</span>
<span class="t ft" style="left:1164px;top:953px;font-size:15px;letter-spacing:-.2px">Showing <span style="color:#333">1 - 20</span> of</span>
<span class="t" style="left:1282.5px;top:945px;font-size:24px;color:#555;letter-spacing:-1.100px;-webkit-text-stroke:.3px #555">1025</span>
<span class="t" style="left:1336.500px;top:952px;font-size:17px;color:#555;letter-spacing:.15px">Admin login failures</span>
<svg style="left:1509px;top:953px" width="8" height="12" viewBox="0 0 8 12"><path d="M7.500 .5V11.500L.5 6Z" fill="#c5d3da"/></svg>
<svg style="left:1534.500px;top:953px" width="8" height="12" viewBox="0 0 8 12"><path d="M.5 .5V11.500L7.500 6Z" fill="#686868"/></svg>
<div class="abs" style="left:0;top:977px;width:1589px;height:5px;background:linear-gradient(rgba(0,0,0,0),rgba(0,0,0,.08))"></div>
</body>
</html>
